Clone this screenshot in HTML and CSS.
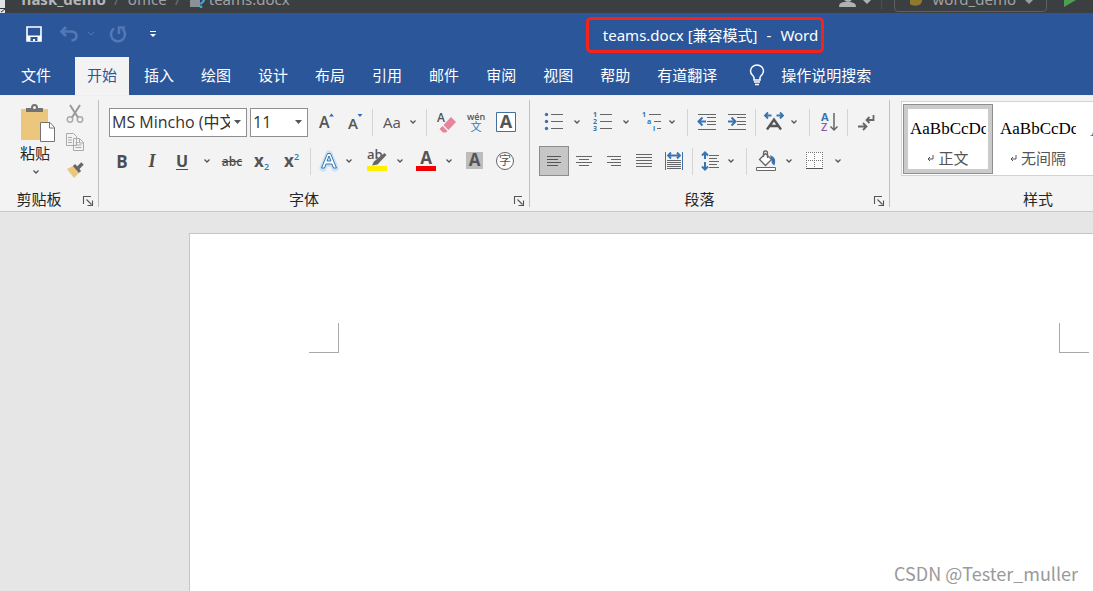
FILE: index.html
```html
<!DOCTYPE html>
<html lang="zh-CN">
<head>
<meta charset="utf-8">
<title>teams.docx - Word</title>
<link rel="stylesheet" href="styles.css">
</head>
<body>
<svg class="defs" aria-hidden="true">
  <symbol id="chev" viewBox="0 0 8 6"><path d="M1.500 1.500 4 4l2.500-2.500" fill="none" stroke="#555" stroke-width="1.300"/></symbol>
  <symbol id="launch" viewBox="0 0 12 12"><path d="M1.500 9V1.500H9M4.500 4.500l5 5M10.500 5.500v5h-5" fill="none" stroke="#555" stroke-width="1.100"/></symbol>
</svg>

<div class="ide">
  <svg class="ide-corner" width="5" height="13" viewBox="0 0 5 13"><path d="M0 0h5v13H0z" fill="#dfe3e8"/><path d="M0 8.500h5M1 12l4-3" stroke="#333" fill="none"/></svg>
  <span class="crumb crumb-root">flask_demo</span><span class="slash">/</span>
  <span class="crumb">office</span><span class="slash">/</span>
  <svg class="ide-icon" width="18" height="20" viewBox="0 0 18 20"><path d="M1 4h10v14H1z" fill="#8a9299"/><text x="9" y="19" class="ide-q">?</text></svg>
  <span class="crumb">teams.docx</span>
  <span class="ide-right">
    <svg width="34" height="20" viewBox="0 0 34 20"><circle cx="9" cy="9" r="4" fill="#afb1b3"/><path d="M0 18c0-5 4-5 8-5s9 0 9 5z" fill="#afb1b3"/><path d="M24 11h8l-4 4z" fill="#afb1b3"/></svg>
    <span class="ide-rule"></span>
    <span class="ide-run">
      <svg width="18" height="20" viewBox="0 0 18 20"><path d="M3 8h12v4c0 5-9 6-12 3z" fill="#8f7a2c"/><path d="M3 4h8v6H3z" fill="#55718a"/></svg>
      <span>word_demo</span>
      <svg width="10" height="20" viewBox="0 0 10 20"><path d="M1 11h8l-4 4z" fill="#9a9c9e"/></svg>
    </span>
    <svg class="ide-play" width="14" height="20" viewBox="0 0 14 20"><path d="M1 4v14l12-7z" fill="#4f9e55"/></svg>
  </span>
</div>

<header class="titlebar">
  <div class="quick">
    <button class="q q-save" aria-label="保存"><svg width="18" height="18" viewBox="0 0 18 18"><path d="M2 2h14v14H2z" fill="none" stroke="#fff" stroke-width="1.600"/><path d="M2 10.500h14V16H2z" fill="#fff"/><path d="M5.500 12h7v4H10v-2H8v2H5.500z" fill="#2b579a"/></svg></button>
    <button class="q q-undo" aria-label="撤消"><svg width="20" height="18" viewBox="0 0 20 18"><path d="M7 2 2.500 6.500 7 11M3 6.500h9.500q5 .5 5 4.500t-5 4.500" fill="none" stroke="#5378b3" stroke-width="2.600"/></svg></button>
    <button class="q q-more" aria-label="撤消选项"><svg width="8" height="6" viewBox="0 0 8 6"><path d="M1 1l3 3 3-3" fill="none" stroke="#5378b3"/></svg></button>
    <button class="q q-redo" aria-label="恢复"><svg width="18" height="18" viewBox="0 0 18 18"><path d="M5 3.500A7 7 0 1 0 13.500 4M10 9V2.500h6" fill="none" stroke="#5378b3" stroke-width="2.600"/></svg></button>
    <button class="q q-menu" aria-label="自定义快速访问工具栏"><svg width="8" height="8" viewBox="0 0 8 8"><path d="M1 1.500h6" stroke="#fff"/><path d="M1 4h6L4 7z" fill="#fff"/></svg></button>
  </div>
  <h1 class="doc-title"><span>teams.docx [兼容模式]</span><span>-</span><span>Word</span></h1>
</header>

<nav class="tabs">
  <button class="tab tab-file">文件</button>
  <button class="tab tab-active">开始</button>
  <button class="tab">插入</button>
  <button class="tab">绘图</button>
  <button class="tab">设计</button>
  <button class="tab">布局</button>
  <button class="tab">引用</button>
  <button class="tab">邮件</button>
  <button class="tab">审阅</button>
  <button class="tab">视图</button>
  <button class="tab">帮助</button>
  <button class="tab">有道翻译</button>
  <button class="tab tell"><svg width="16" height="22" viewBox="0 0 16 22"><path d="M5 16v-2.500C5 11.500 1.500 11 1.500 7a6.500 6 0 0 1 13 0c0 4-3.500 4.500-3.500 6.500V16zM5 18h6M6 20.500h4" fill="none" stroke="#fff" stroke-width="1.500"/></svg>操作说明搜索</button>
</nav>

<section class="ribbon">
  <div class="group">
    <div class="clip">
      <button class="paste">
        <svg width="36" height="40" viewBox="0 0 36 40"><path d="M1 5h27v31H1z" fill="#ebc67c"/><path d="M6 8V4h5q0-4 3.500-4T18 4h5v4z" fill="#737373"/><circle cx="14.500" cy="3.500" r="1.500" fill="#f3f3f3"/><path d="M20.500 18.500H30l4.500 5v14h-14z" fill="#fff" stroke="#737373"/><path d="M29.500 18.500V24h5" fill="none" stroke="#737373"/></svg>
        <span>粘贴</span>
        <svg width="8" height="6"><use href="#chev"/></svg>
      </button>
      <div class="clip-side">
        <button class="mini" aria-label="剪切"><svg width="18" height="20" viewBox="0 0 18 20"><g fill="none" stroke="#aaa" stroke-width="1.500"><circle cx="4" cy="15.500" r="2.700"/><circle cx="14" cy="15.500" r="2.700"/></g><path d="M4 1l8 12.500M14 1 6 13.500" stroke="#999" stroke-width="2"/></svg></button>
        <button class="mini" aria-label="复制"><svg width="18" height="20" viewBox="0 0 18 20"><path d="M.5 1.500h7l3 3v9H.5zM7.500 6.500h6l4 4v8h-10z" fill="#f3f3f3" stroke="#aaa"/><path d="M2 5.500h4M2 8h4M2 10.500h4M9.500 10.500h3M9.500 13h6M9.500 15.500h6M13.500 7v4h4" stroke="#aaa" fill="none"/></svg></button>
        <button class="mini" aria-label="格式刷"><svg width="18" height="20" viewBox="0 0 18 20"><path d="M1 9l6-3 6 7-5 5z" fill="#ebc67c"/><path d="M8 5l6 7" stroke="#666" stroke-width="3"/><path d="M12 8l4.500-4.500" stroke="#666" stroke-width="3.400"/></svg></button>
      </div>
    </div>
    <div class="foot"><span>剪贴板</span><button class="launch" aria-label="剪贴板设置"><svg width="12" height="12"><use href="#launch"/></svg></button></div>
  </div>

  <div class="group group-font">
    <div class="row row-combo">
      <select class="combo combo-font" aria-label="字体"><option>MS Mincho (中文正文)</option></select>
      <select class="combo combo-size" aria-label="字号"><option>11</option></select>
      <button class="ic" aria-label="增大字号"><svg width="30" height="30" viewBox="0 0 30 30"><text x="8" y="21" class="g16">A</text><path d="M18 9.500h5l-2.500-3z" fill="#2f6fb5"/></svg></button>
      <button class="ic" aria-label="减小字号"><svg width="30" height="30" viewBox="0 0 30 30"><text x="7" y="22" class="g15">A</text><path d="M16.500 7h5L19 10z" fill="#2f6fb5"/></svg></button>
      <i class="sep"></i>
      <button class="case" aria-label="更改大小写"><span>Aa</span><svg width="8" height="6"><use href="#chev"/></svg></button>
      <i class="sep sep-r"></i>
      <button class="ic" aria-label="清除所有格式"><svg width="30" height="30" viewBox="0 0 30 30"><text x="6" y="15" class="g12">A</text><path d="M12.500 18l7.500-8 5 5-7.500 8zM11.500 19l5 5-1.500 1.500h-3L8.500 22z" fill="#e8839b"/></svg></button>
      <button class="ic" aria-label="拼音指南"><svg width="30" height="30" viewBox="0 0 30 30"><text x="15" y="13" class="g9">wén</text><text x="15" y="24" class="g11b">文</text></svg></button>
      <button class="ic" aria-label="字符边框"><svg width="30" height="30" viewBox="0 0 30 30"><path d="M5.500 5.500h19v19h-19z" fill="#fff" stroke="#41719c"/><text x="15" y="21" class="g18">A</text></svg></button>
    </div>
    <div class="row">
      <button class="ic t-b" aria-label="加粗">B</button>
      <button class="ic t-i" aria-label="倾斜">I</button>
      <button class="ic t-u" aria-label="下划线">U</button>
      <button class="car car-u" aria-label="下划线选项"><svg width="8" height="6"><use href="#chev"/></svg></button>
      <button class="ic t-s" aria-label="删除线">abc</button>
      <button class="ic" aria-label="下标"><svg width="30" height="30" viewBox="0 0 30 30"><text x="7" y="21" class="gx">x</text><text x="17" y="24" class="gn">2</text></svg></button>
      <button class="ic" aria-label="上标"><svg width="30" height="30" viewBox="0 0 30 30"><text x="7" y="21" class="gx">x</text><text x="17" y="14" class="gn">2</text></svg></button>
      <i class="sep sep-m"></i>
      <button class="ic" aria-label="文本效果"><svg width="30" height="30" viewBox="0 0 30 30"><path d="M9 22 15 8l6 14M11.500 17.500h7" class="glow"/><path d="M7.500 22 13.500 7.500h3L22.500 22h-3l-1.500-4h-6l-1.500 4zM13 15h4l-2-5z" fill="#fff" stroke="#3a74b0"/></svg></button>
      <button class="car car-t" aria-label="文本效果选项"><svg width="8" height="6"><use href="#chev"/></svg></button>
      <button class="ic ic-hl" aria-label="突出显示"><svg width="30" height="30" viewBox="0 0 30 30"><text x="5" y="13" class="g13">ab</text><path d="M22.500 7l2 2-9 9.500-5.500 1 2-4z" fill="#666"/><path d="M5 20h20v5H5z" fill="#fff000"/></svg></button>
      <button class="car" aria-label="突出显示选项"><svg width="8" height="6"><use href="#chev"/></svg></button>
      <button class="ic ic-n" aria-label="字体颜色"><svg width="30" height="30" viewBox="0 0 30 30"><text x="15" y="18" class="g17">A</text><path d="M5 20h20v5H5z" fill="#f00000"/></svg></button>
      <button class="car" aria-label="字体颜色选项"><svg width="8" height="6"><use href="#chev"/></svg></button>
      <button class="ic ic-n" aria-label="字符底纹"><svg width="30" height="30" viewBox="0 0 30 30"><path d="M6 6h17v17H6z" fill="#bdbdbd"/><text x="14.500" y="20" class="g17">A</text></svg></button>
      <button class="ic" aria-label="带圈字符"><svg width="30" height="30" viewBox="0 0 30 30"><circle cx="15" cy="15" r="8.500" fill="#fff" stroke="#666"/><text x="15" y="19" class="g11">字</text></svg></button>
    </div>
    <div class="foot"><span>字体</span><button class="launch" aria-label="字体设置"><svg width="12" height="12"><use href="#launch"/></svg></button></div>
  </div>

  <div class="group group-para">
    <div class="row">
      <button class="ic" aria-label="项目符号"><svg width="30" height="30" viewBox="0 0 30 30"><path d="M12 7.500h12M12 14.500h12M12 21.500h12" stroke="#666"/><g fill="#3a74b0"><circle cx="7.500" cy="7.500" r="1.700"/><circle cx="7.500" cy="14.500" r="1.700"/><circle cx="7.500" cy="21.500" r="1.700"/></g></svg></button>
      <button class="car" aria-label="项目符号选项"><svg width="8" height="6"><use href="#chev"/></svg></button>
      <button class="ic ic-n" aria-label="编号"><svg width="30" height="30" viewBox="0 0 30 30"><path d="M12 7.500h12M12 14.500h12M12 21.500h12" stroke="#666"/><text x="5" y="10" class="num">1</text><text x="5" y="17" class="num">2</text><text x="5" y="24" class="num">3</text></svg></button>
      <button class="car" aria-label="编号选项"><svg width="8" height="6"><use href="#chev"/></svg></button>
      <button class="ic ic-n" aria-label="多级列表"><svg width="30" height="30" viewBox="0 0 30 30"><path d="M12 7.500h12M17 14.500h7M20 21.500h4" stroke="#666"/><text x="5" y="10" class="num">1</text><text x="10" y="17" class="num">a</text><text x="16" y="24" class="num">i</text></svg></button>
      <button class="car car-t" aria-label="多级列表选项"><svg width="8" height="6"><use href="#chev"/></svg></button>
      <i class="sep sep-w"></i>
      <button class="ic" aria-label="减少缩进量"><svg width="30" height="30" viewBox="0 0 30 30"><path d="M6 7.500h18M15 10.500h9M15 14.500h9M15 17.500h9M6 22.500h18" stroke="#666"/><path d="M14 14.500H7M10.500 10.500l-4 4 4 4" fill="none" stroke="#3a74b0" stroke-width="2"/></svg></button>
      <button class="ic" aria-label="增加缩进量"><svg width="30" height="30" viewBox="0 0 30 30"><path d="M6 7.500h18M15 10.500h9M15 14.500h9M15 17.500h9M6 22.500h18" stroke="#666"/><path d="M6 14.500h7M9.500 10.500l4 4-4 4" fill="none" stroke="#3a74b0" stroke-width="2"/></svg></button>
      <i class="sep sep-m"></i>
      <button class="ic" aria-label="中文版式"><svg width="30" height="30" viewBox="0 0 30 30"><path d="M8 22.500l7-10 7 10M10.500 19h9" fill="none" stroke="#555" stroke-width="2.400"/><path d="M12.500 8.500H6.500M9 5.500l-3 3 3 3M17.500 8.500h6M21 5.500l3 3-3 3" fill="none" stroke="#3a74b0" stroke-width="1.800"/></svg></button>
      <button class="car car-t" aria-label="中文版式选项"><svg width="8" height="6"><use href="#chev"/></svg></button>
      <i class="sep sep-w"></i>
      <button class="ic" aria-label="排序"><svg width="30" height="30" viewBox="0 0 30 30"><text x="7" y="14" class="az-a">A</text><text x="7" y="24" class="az-z">Z</text><path d="M20 6v17M16.500 19.500 20 23l3.500-3.500" fill="none" stroke="#666" stroke-width="1.500"/></svg></button>
      <i class="sep sep-m"></i>
      <button class="ic" aria-label="显示编辑标记"><svg width="30" height="30" viewBox="0 0 30 30"><path d="M22.500 8v5H16M18.500 10l-3 3 3 3M7 19.500h8M12 16l3.500 3.500L12 23" fill="none" stroke="#666" stroke-width="1.800"/></svg></button>
    </div>
    <div class="row">
      <button class="ic ic-on" aria-label="左对齐"><svg width="30" height="30" viewBox="0 0 30 30"><path d="M8 10.500h14M8 13.500h11M8 16.500h14M8 19.500h11" stroke="#555"/></svg></button>
      <button class="ic" aria-label="居中"><svg width="30" height="30" viewBox="0 0 30 30"><path d="M7 10.500h16M10 13.500h10M7 16.500h16M10 19.500h10" stroke="#666"/></svg></button>
      <button class="ic" aria-label="右对齐"><svg width="30" height="30" viewBox="0 0 30 30"><path d="M8 10.500h14M12 13.500h10M8 16.500h14M12 19.500h10" stroke="#666"/></svg></button>
      <button class="ic" aria-label="两端对齐"><svg width="30" height="30" viewBox="0 0 30 30"><path d="M7 8.500h16M7 11.500h16M7 14.500h16M7 17.500h16M7 20.500h16" stroke="#666"/></svg></button>
      <button class="ic" aria-label="分散对齐"><svg width="30" height="30" viewBox="0 0 30 30"><path d="M8 14.500h14M8 16.500h14M8 18.500h14M8 20.500h14M8 22.500h14" stroke="#666"/><path d="M6.500 6v18M23.500 6v18" stroke="#3a74b0"/><path d="M9 9.500h12M12 6.500l-3 3 3 3M18 6.500l3 3-3 3" fill="none" stroke="#3a74b0" stroke-width="1.800"/></svg></button>
      <i class="sep sep-m"></i>
      <button class="ic" aria-label="行距"><svg width="30" height="30" viewBox="0 0 30 30"><path d="M13 9.500h10M13 12.500h8M13 15.500h10M13 18.500h8M13 21.500h10" stroke="#666"/><path d="M9 7v6M6 9.500l3-3 3 3M9 16v7M6 20.500l3 3 3-3" fill="none" stroke="#3a74b0" stroke-width="2"/></svg></button>
      <button class="car car-t" aria-label="行距选项"><svg width="8" height="6"><use href="#chev"/></svg></button>
      <i class="sep sep-w"></i>
      <button class="ic" aria-label="底纹"><svg width="30" height="30" viewBox="0 0 30 30"><path d="M19 9q7 2 4.500 10.500-3-1-3-5z" fill="#3a74b0"/><path d="M8.500 13.500l6-6 6 6-6 6zM12.500 11V7q0-2 2-2t2 2v5" fill="#fff" stroke="#666" stroke-width="1.300"/><path d="M5.500 21.500h19v3h-19z" fill="#fff" stroke="#666"/></svg></button>
      <button class="car" aria-label="底纹选项"><svg width="8" height="6"><use href="#chev"/></svg></button>
      <button class="ic ic-n" aria-label="边框"><svg width="30" height="30" viewBox="0 0 30 30"><path d="M6 6h17v17H6z" fill="#fff"/><path d="M6 6.500h17M6 14.500h17M6.500 6v17M14.500 6v17M22.500 6v17" stroke="#777" stroke-dasharray="1 1"/><path d="M6 22.500h17" stroke="#555"/></svg></button>
      <button class="car" aria-label="边框选项"><svg width="8" height="6"><use href="#chev"/></svg></button>
    </div>
    <div class="foot"><span>段落</span><button class="launch" aria-label="段落设置"><svg width="12" height="12"><use href="#launch"/></svg></button></div>
  </div>

  <div class="group group-styles">
    <div class="gallery">
      <button class="style style-on"><span class="sample">AaBbCcDc</span><span class="sname"><svg width="7" height="8" viewBox="0 0 7 8"><path d="M6 1v4H1M3 3 1 5l2 2" fill="none" stroke="#555"/></svg>正文</span></button>
      <button class="style"><span class="sample">AaBbCcDc</span><span class="sname"><svg width="7" height="8" viewBox="0 0 7 8"><path d="M6 1v4H1M3 3 1 5l2 2" fill="none" stroke="#555"/></svg>无间隔</span></button>
      <button class="style"><span class="sample sample-h">A</span></button>
    </div>
    <div class="foot"><span>样式</span></div>
  </div>
</section>

<main class="canvas">
  <article class="page">
    <div class="marks"><i class="mark mark-l"></i><i class="mark mark-r"></i></div>
  </article>
  <span class="watermark">CSDN @Tester_muller</span>
</main>
</body>
</html>
```
FILE: styles.css
```css
* { box-sizing: border-box; }
body {
  margin: 0;
  height: 100vh;
  display: flex;
  flex-direction: column;
  overflow: hidden;
  font-family: "Open Sans", "Noto Sans CJK SC", sans-serif;
  font-size: 15px;
  color: #262626;
  background: #e6e6e6;
}
button { border: 0; padding: 0; margin: 0; background: none; font: inherit; color: inherit; }
svg { display: block; flex: none; }
.defs { position: absolute; width: 0; height: 0; }

/* window behind */
.ide {
  flex: none;
  height: 13px;
  display: flex;
  align-items: flex-end;
  overflow: hidden;
  background: #3c3f41;
  color: #a0a2a4;
  font-family: "Noto Sans", sans-serif;
  line-height: 20px;
  padding-bottom: 4px;
}
.ide-corner { margin: 0 16px -4px 0; }
.crumb-root { font-weight: bold; color: #b4b6b8; }
.slash { width: 22px; text-align: center; color: #6c6f71; }
.ide-icon { margin-right: 2px; }
.ide-q { font: bold 15px "Noto Sans", sans-serif; fill: #3fb0d0; }
.ide-right { margin-left: auto; display: flex; align-items: flex-end; }
.ide-rule { width: 1px; height: 20px; margin: 0 12px 0 8px; background: #4d5052; }
.ide-run { display: flex; align-items: flex-end; gap: 8px; padding: 0 12px 2px; margin: 0 16px -3px 0; border: 1px solid #5e6163; border-radius: 4px; }
.ide-play { margin-right: 16px; }

/* title bar */
.titlebar {
  flex: none;
  height: 44px;
  display: grid;
  grid-template-columns: minmax(0, 582fr) auto minmax(0, 267fr);
  align-items: start;
  background: #2b579a;
  color: #fff;
}
.quick { display: flex; align-items: center; height: 42px; padding-left: 25px; }
.q-undo { margin-left: 16px; }
.q-more { margin-left: 8px; }
.q-redo { margin-left: 14px; }
.q-menu { margin-left: 22px; }
.doc-title {
  display: flex;
  gap: 9px;
  margin: 4px 0 0;
  padding: 0 3px 0 14px;
  height: 36px;
  line-height: 30px;
  font-family: "Noto Sans", "Noto Sans CJK SC", sans-serif;
  font-size: 15px;
  font-weight: normal;
  white-space: nowrap;
  border: 3px solid #f5231c;
  border-radius: 5px;
}

/* tabs */
.tabs { flex: none; display: flex; gap: 3px; height: 38px; padding-left: 9px; background: #2b579a; color: #fff; }
.tab { padding: 0 12px 4px; white-space: nowrap; }
.tab-file { margin-right: 9px; }
.tab-active { background: #f3f3f3; color: #2b579a; }
.tell { display: flex; align-items: center; gap: 16px; margin-left: 5px; padding-bottom: 3px; }

/* ribbon */
.ribbon {
  flex: none;
  display: flex;
  padding: 4px 0;
  overflow: hidden;
  background: #f3f3f3;
  border-top: 1px solid #e3f1fb;
  border-bottom: 1px solid #c8c8c8;
}
.group { flex: none; display: flex; flex-direction: column; border-right: 1px solid #c0c0c0; }
.group-font { padding: 7px 0 0 8px; }
.group-para { padding: 7px 0 0 9px; }
.group-styles { border: 0; padding: 1px 0 0 11px; width: 296px; }
.row { display: flex; align-items: center; height: 30px; margin-bottom: 9px; padding-right: 8px; }
.foot { display: flex; align-items: center; height: 16px; line-height: 16px; margin-top: auto; }
.group-font .foot { margin: 6px 0 0 -8px; }
.group-para .foot { margin: 6px 0 0 -9px; }
.group-styles .foot { margin-left: -11px; }
.foot span { flex: 1; text-align: center; }
.launch { width: 20px; display: flex; justify-content: center; padding-top: 4px; }
.clip { display: flex; padding: 4px 14px 0 20px; height: 91px; }
.paste { display: flex; flex-direction: column; align-items: center; line-height: 20px; width: 36px; }
.paste span { margin: -1px 6px 6px 0; }
.paste svg:last-child { margin-right: 4px; }
.clip-side { display: flex; flex-direction: column; gap: 8px; margin-left: 10px; }
.mini { height: 20px; }

.ic { width: 30px; height: 30px; display: flex; align-items: center; justify-content: center; color: #4d4d4d; }
.ic-n { margin-left: 3px; }
.ic-hl { margin-left: 8px; }
.ic-on { border: 1px solid #8c8c8c; background: #c6c6c6; }
.car { width: 16px; height: 30px; display: flex; align-items: center; justify-content: center; }
.car-t { width: 10px; }
.car-u { width: 20px; }
.sep { width: 1px; height: 27px; background: #d4d4d4; margin: 0 1px; }
.sep-r { margin: 0 4px 0 0; }
.sep-m { margin: 0 3px; }
.sep-w { margin: 0 4px 0 10px; }
.case { display: flex; align-items: center; justify-content: center; gap: 8px; width: 52px; color: #555; }

.combo {
  appearance: none;
  height: 29px;
  margin: 0 3px 0 0;
  padding: 0 16px 0 2px;
  border: 1px solid #8f8f8f;
  border-radius: 0;
  font: inherit;
  font-size: 16px;
  color: #333;
  background: #fff url("data:image/svg+xml,%3Csvg xmlns='http://www.w3.org/2000/svg' width='8' height='5'%3E%3Cpath d='M0 0h7L3.500 4z' fill='%23555'/%3E%3C/svg%3E") no-repeat right 4px center;
}
.row-combo .combo-font { margin-left: 2px; width: 138px; }
.combo-size { width: 58px; }

.t-b { font-weight: bold; font-size: 17px; }
.t-i { font: italic bold 18px "Liberation Serif", serif; }
.t-u { font-weight: bold; font-size: 16px; text-decoration: underline; text-underline-offset: 2px; }
.t-s { font-weight: 600; font-size: 12px; text-decoration: line-through; }
svg text { font-family: "Open Sans", "Noto Sans CJK SC", sans-serif; fill: #555; }
.g12 { font-size: 12px; font-weight: 600; }
.g13 { font-size: 13px; font-weight: 600; }
.g15 { font-size: 15px; font-weight: 600; }
.g16 { font-size: 16px; font-weight: 600; }
.g17 { font-size: 17px; font-weight: bold; text-anchor: middle; }
.g18 { font-size: 18px; font-weight: bold; text-anchor: middle; }
.g9 { font-size: 9px; font-weight: 600; text-anchor: middle; }
.g11 { font-size: 12px; text-anchor: middle; }
svg .g11b { font-size: 11px; text-anchor: middle; fill: #3a74b0; }
.gx { font-size: 17px; font-weight: bold; }
svg .gn { font-size: 9px; font-weight: 600; fill: #3a74b0; }
svg .num { font-size: 7px; font-weight: bold; fill: #3a74b0; }
svg .az-a { font-size: 11px; font-weight: bold; fill: #3a74b0; }
svg .az-z { font-size: 11px; font-weight: 600; fill: #8a5aa8; }
.glow { fill: none; stroke: #c9e1f5; stroke-width: 7px; stroke-linejoin: round; stroke-linecap: round; }

/* style gallery */
.gallery { display: flex; padding: 2px 1px; background: #fff; border: 1px solid #d2d2d2; height: 75px; }
.style { flex: none; width: 90px; height: 70px; padding: 9px 7px 0; display: flex; flex-direction: column; overflow: hidden; }
.style-on { border: 1px solid #8f8f8f; box-shadow: inset 0 0 0 4px #cbcbcb; padding: 8px 6px 0; }
.sample { width: 76px; overflow: hidden; text-align: left; font: 17px/32px "Liberation Serif", serif; color: #000; }
.sample-h { color: #2e74b5; font-size: 22px; }
.sname { display: flex; align-items: center; justify-content: center; gap: 4px; width: 76px; line-height: 26px; color: #555; }

/* document */
.canvas { flex: 1; position: relative; display: flex; padding: 21px 0 0 189px; }
.page { flex: 1; background: #fff; border: 1px solid #c6c6c6; border-width: 1px 0 0 1px; padding: 89px 4px 0 119px; }
.marks { display: flex; justify-content: space-between; }
.mark { width: 30px; height: 30px; border: 0 solid #aaa; border-bottom-width: 1px; }
.mark-l { border-right-width: 1px; }
.mark-r { border-left-width: 1px; }
.watermark { position: absolute; right: 15px; bottom: 6px; font: 18px/24px "Noto Sans CJK SC", sans-serif; color: #999; }
```
